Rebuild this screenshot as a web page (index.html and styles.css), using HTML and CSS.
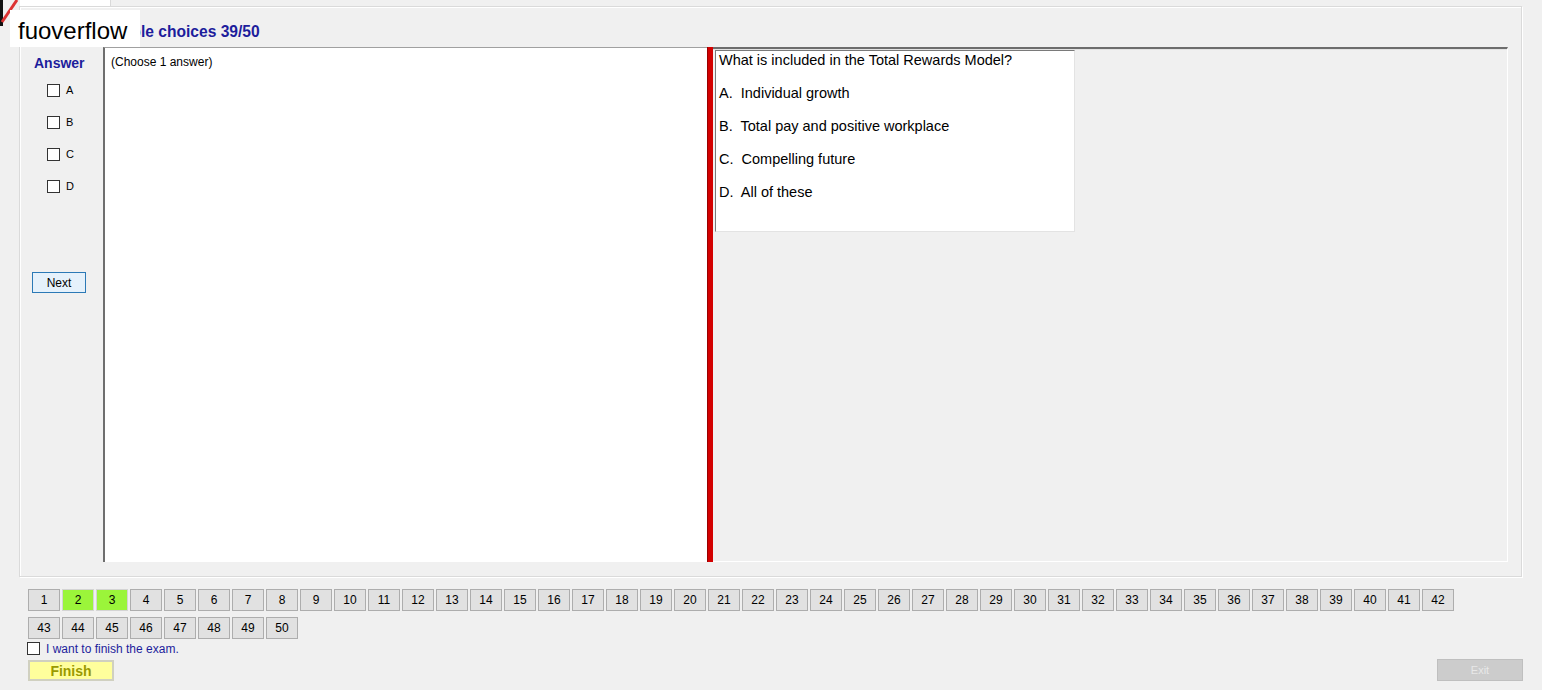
FILE: index.html
```html
<!DOCTYPE html>
<html lang="en">
<head>
    <meta charset="UTF-8">
    <meta name="viewport" content="width=device-width, initial-scale=1.0">
    <title>Exam</title>
    <link rel="stylesheet" href="styles.css">
</head>
<body>
    <svg class="corner" width="22" height="32" viewBox="0 0 22 32">
        <rect x="0" y="0" width="3" height="26" fill="#111"/>
        <line x1="17" y1="0" x2="2" y2="22" stroke="#d33" stroke-width="3"/>
    </svg>
    <div class="brand">fuoverflow</div>

    <div class="tabs"><div class="tab"></div></div>

    <div class="group">
        <div class="title">Multiple choices 39/50</div>
        <div class="main">
            <div class="answer-col">
                <div class="answer-head">Answer</div>
                <label class="opt"><span class="box"></span>A</label>
                <label class="opt"><span class="box"></span>B</label>
                <label class="opt"><span class="box"></span>C</label>
                <label class="opt"><span class="box"></span>D</label>
                <button class="next">Next</button>
            </div>
            <div class="editor">(Choose 1 answer)</div>
            <div class="splitter"></div>
            <div class="right">
                <div class="question">
                    <p>What is included in the Total Rewards Model?</p>
                    <p>A.&nbsp; Individual growth</p>
                    <p>B.&nbsp; Total pay and positive workplace</p>
                    <p>C.&nbsp; Compelling future</p>
                    <p>D.&nbsp; All of these</p>
                </div>
            </div>
        </div>
    </div>

    <div class="numbers" id="numbers"></div>

    <label class="finish-check"><span class="box"></span>I want to finish the exam.</label>
    <div class="bottom-row">
        <button class="finish">Finish</button>
        <button class="exit">Exit</button>
    </div>

    <script>
        let numbers = document.getElementById("numbers");
        for (let i = 1; i <= 50; i++) {
            let btn = document.createElement("button");
            btn.className = "num";
            if (i === 2 || i === 3) {
                btn.className = "num done";
            }
            btn.textContent = i;
            numbers.appendChild(btn);
        }
    </script>
</body>
</html>
```

FILE: styles.css
```css
body {
    margin: 0;
    padding: 0;
    background: #f0f0f0;
    font-family: "Liberation Sans", Arial, sans-serif;
    color: #000;
    width: 1542px;
    height: 690px;
    overflow: hidden;
}
.corner {
    position: absolute;
    left: 0;
    top: 0;
}
.brand {
    position: absolute;
    left: 10px;
    top: 10px;
    width: 130px;
    height: 37px;
    background: #fff;
    font-size: 24px;
    line-height: 42px;
    padding-left: 8px;
    box-sizing: border-box;
}
.tabs {
    height: 6px;
}
.tab {
    margin-left: 20px;
    width: 90px;
    height: 6px;
    background: #fff;
    border-right: 1px solid #d9d9d9;
}
.group {
    margin-left: 19px;
    width: 1503px;
    height: 571px;
    box-sizing: border-box;
    border: 1px solid #dadada;
    box-shadow: inset 1px 1px 0 #fff, 1px 1px 0 #fff;
}
.title {
    height: 40px;
    box-sizing: border-box;
    padding: 16px 0 0 75px;
    font-size: 15.6px;
    line-height: 18px;
    font-weight: bold;
    color: #1d1d9c;
}
.main {
    display: flex;
    margin-left: 6px;
    width: 1482px;
    height: 515px;
}
.answer-col {
    width: 77px;
    display: flex;
    flex-direction: column;
}
.answer-head {
    font-size: 14px;
    font-weight: bold;
    color: #1d1d9c;
    margin: 8px 0 0 8px;
    height: 19px;
}
.opt {
    display: flex;
    align-items: center;
    font-size: 11px;
    height: 32px;
    margin-left: 21px;
}
.box {
    width: 11px;
    height: 11px;
    border: 1px solid #333;
    background: #fff;
    margin-right: 6px;
}
.next {
    margin: 70px 0 0 6px;
    width: 54px;
    height: 21px;
    background: #e5f1fb;
    border: 1px solid #2b79b6;
    font-family: "Liberation Sans", Arial, sans-serif;
    font-size: 12px;
    padding: 0;
}
.editor {
    width: 604px;
    box-sizing: border-box;
    background: #fff;
    border-top: 1px solid #a0a0a0;
    border-left: 2px solid #6e6e6e;
    font-size: 12px;
    padding: 7px 0 0 6px;
}
.splitter {
    width: 5px;
    background: #d30000;
    border-left: 1px solid #900;
}
.right {
    flex: 1;
    border-top: 2px solid #6d6d6d;
    border-right: 1px solid #fff;
    border-bottom: 1px solid #fff;
    box-shadow: inset 0 1px 0 #e3e3e3;
}
.question {
    margin: 1px 0 0 2px;
    width: 360px;
    height: 182px;
    box-sizing: border-box;
    background: #fff;
    border-left: 1px solid #7a7a7a;
    border-top: 1px solid #7a7a7a;
    border-right: 1px solid #e3e3e3;
    border-bottom: 1px solid #e3e3e3;
    padding: 0 0 0 3px;
    font-size: 14.5px;
}
.question p {
    margin: 0 0 15px 0;
    line-height: 18px;
}
.numbers {
    margin: 12px 0 0 28px;
    width: 1430px;
    display: flex;
    flex-wrap: wrap;
    column-gap: 2px;
    row-gap: 6px;
}
.num {
    width: 32px;
    height: 22px;
    padding: 0;
    background: #e1e1e1;
    border: 1px solid #adadad;
    font-family: "Liberation Sans", Arial, sans-serif;
    font-size: 12px;
    color: #000;
}
.num.done {
    background: #9bf53a;
    border-color: #d4d4d4;
}
.finish-check {
    display: flex;
    align-items: center;
    margin: 1px 0 0 27px;
    height: 17px;
    font-size: 12px;
    color: #1d1d9c;
}
.finish-check .box {
    margin-right: 6px;
}
.bottom-row {
    display: flex;
    justify-content: space-between;
    align-items: flex-start;
    width: 1495px;
    margin-left: 28px;
    margin-top: 2px;
}
.finish {
    width: 86px;
    height: 21px;
    margin-top: 1px;
    padding: 0;
    background: #ffff9c;
    border: 2px solid #d0d0c0;
    color: #9a9a00;
    font-family: "Liberation Sans", Arial, sans-serif;
    font-weight: bold;
    font-size: 14px;
}
.exit {
    width: 86px;
    height: 22px;
    padding: 0;
    background: #cccccc;
    border: 1px solid #bfbfbf;
    color: #e8e8e8;
    font-family: "Liberation Sans", Arial, sans-serif;
    font-size: 11px;
}
```
